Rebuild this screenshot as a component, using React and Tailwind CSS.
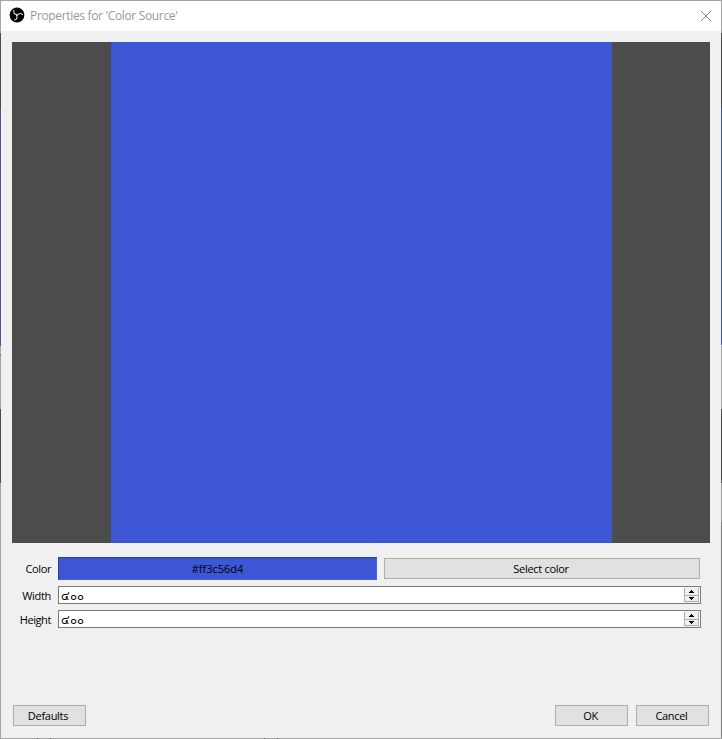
import React from "react";

const font = "font-['Open_Sans','DejaVu_Sans',sans-serif]";

function Button({ children, className = "" }) {
  return (
    <button className={`flex h-[21px] items-center justify-center border border-[#adadad] bg-[#e1e1e1] tracking-[-0.3px] ${className}`}>
      {children}
    </button>
  );
}

function Arrow({ down }) {
  return (
    <svg width="5" height="3" viewBox="0 0 5 3" shapeRendering="crispEdges" className={down ? "rotate-180" : ""}>
      <path d="M2 0h1v1h1v1h1v1H0V2h1V1h1z" />
    </svg>
  );
}

function SpinBox() {
  return (
    <div className="flex h-[18px] w-[643px] justify-between border border-[#7a7a7a] bg-white">
      <span className="pl-[2px] pt-px font-['DejaVu_Sans',sans-serif] text-[11.5px] leading-4 tracking-[-0.2px]">๔๐๐</span>
      <div className="mr-px flex w-[15px] flex-col bg-[#f0f0f0]">
        <div className="mt-px flex h-2 items-center justify-center border-x border-b border-[#adadad]"><Arrow /></div>
        <div className="flex h-[6px] items-center justify-center border-x border-b border-[#adadad]"><Arrow down /></div>
      </div>
    </div>
  );
}

export default function App() {
  return (
    <div className={`flex h-[739px] w-[722px] flex-col overflow-hidden bg-[#f0f0f0] text-[11px] leading-4 text-black ${font}`}>
      <div className="h-px shrink-0 bg-[#a3a3a3]" />
      <div className="flex h-[737px] shrink-0">
        <div className="flex w-px flex-col bg-[#a5a5a5]">
          <div className="mt-8 h-[75px] bg-[#4c4c4c]" />
          <div className="h-[2px] bg-[#c52929]" />
          <div className="h-[234px] bg-[#4854a0]" />
          <div className="h-[2px] bg-[#c52929]" />
          <div className="mt-[8px] h-[2px] bg-[#8a78a5]" />
          <div className="mt-[53px] h-[74px] bg-[#4c4c4c]" />
        </div>
        <div className="flex w-[720px] flex-col">
          <header className="flex h-[30px] items-center bg-white pl-2">
            <svg className="-mt-[2px]" width="16" height="16" viewBox="0 0 16 16" fill="none">
              <circle cx="8" cy="8" r="7.4" fill="#000" />
              <g stroke="#e4e4e4" strokeWidth="1.1" strokeLinecap="round">
                <path d="M8 7.4C5.6 7.4 4.2 5.8 4.9 3.4" />
                <path d="M8 7.4C5.6 7.4 4.2 5.8 4.9 3.4" transform="rotate(120 8 8)" />
                <path d="M8 7.4C5.6 7.4 4.2 5.8 4.9 3.4" transform="rotate(240 8 8)" />
              </g>
            </svg>
            <span className="ml-[5px] whitespace-nowrap text-[12px] tracking-[-0.34px] text-[#999]">Properties for 'Color Source'</span>
            <svg className="ml-auto mr-[10px]" width="10" height="10" viewBox="0 0 10 10" stroke="#888">
              <path d="M0 0L10 10M10 0L0 10" />
            </svg>
          </header>
          <div className="ml-[11px] mt-[11px] flex h-[501px] w-[698px] bg-[#4c4c4c] pl-[99px]">
            <div className="w-[501px] bg-[#3c56d4]" />
          </div>
          <form className="ml-[11px] mt-[14px] grid grid-cols-[39px_643px] gap-x-[7px]">
            <span className="pt-1 text-right tracking-[-0.4px]">Color</span>
            <div className="flex h-[23px]">
              <div className="flex w-[319px] items-center justify-center border border-[#4260ee] border-l-[#2d3f91] border-t-[#2d3f91] bg-[#3c56d4]">#ff3c56d4</div>
              <Button className="ml-[7px] mt-px w-[316px] pr-[2px]">Select color</Button>
            </div>
            <span className="mt-2 text-right tracking-[-0.3px]">Width</span>
            <div className="mt-[6px]"><SpinBox /></div>
            <span className="mt-2 text-right tracking-[-0.4px]">Height</span>
            <div className="mt-[6px]"><SpinBox /></div>
          </form>
          <footer className="mb-3 ml-3 mr-3 mt-auto flex">
            <Button className="w-[73px] pr-[3px]">Defaults</Button>
            <Button className="ml-auto w-[73px] pr-[2px]">OK</Button>
            <Button className="ml-2 w-[73px] pr-[2px]">Cancel</Button>
          </footer>
        </div>
        <div className="flex w-px flex-col bg-[#777]">
          <div className="h-8 bg-[#a5a5a5]" />
          <div className="h-[75px] bg-[#4c4c4c]" />
          <div className="h-[237px] bg-[#4854a0]" />
          <div className="h-[64px] bg-[#a5a5a5]" />
          <div className="h-[74px] bg-[#4c4c4c]" />
          <div className="h-[39px] bg-[#a0a0a0]" />
        </div>
      </div>
      <div className="flex h-px shrink-0 bg-[#a3a3a3]">
        <div className="ml-[37px] w-px bg-[#666]" />
        <div className="ml-[12px] w-px bg-[#666]" />
        <div className="ml-[213px] w-px bg-[#666]" />
        <div className="ml-[12px] w-px bg-[#666]" />
      </div>
    </div>
  );
}
